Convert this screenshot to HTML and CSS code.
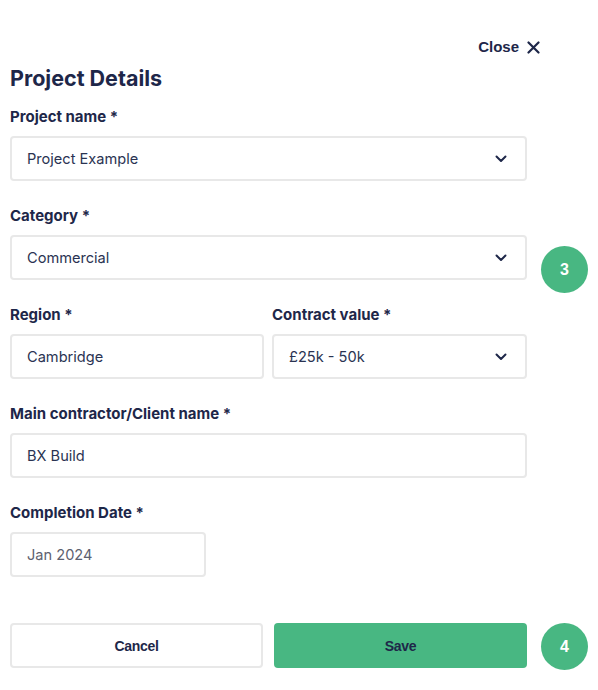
FILE: index.html
```html
<!DOCTYPE html>
<html>
<head>
<meta charset="utf-8">
<link rel="stylesheet" href="styles.css">
</head>
<body>
<div class="page">
  <div class="topbar">
    <button class="close">Close
      <svg class="close-x" width="13" height="13" viewBox="0 0 13 13"><path d="M1.5 1.5 L11.5 11.5 M11.5 1.5 L1.5 11.5" stroke="#1e2749" stroke-width="2.2" stroke-linecap="round"/></svg>
    </button>
  </div>
  <form class="form">
    <h1 class="title">Project Details</h1>
    <div class="field">
      <label class="label">Project name *</label>
      <div class="control select"><span class="value">Project Example</span><svg class="chev" width="12" height="8" viewBox="0 0 12 8"><path d="M1.5 1.5 L6 6 L10.5 1.5" fill="none" stroke="#1e2749" stroke-width="2" stroke-linecap="round" stroke-linejoin="round"/></svg></div>
    </div>
    <div class="field step-host">
      <label class="label">Category *</label>
      <div class="control select"><span class="value">Commercial</span><svg class="chev" width="12" height="8" viewBox="0 0 12 8"><path d="M1.5 1.5 L6 6 L10.5 1.5" fill="none" stroke="#1e2749" stroke-width="2" stroke-linecap="round" stroke-linejoin="round"/></svg></div>
      <span class="step step-3">3</span>
    </div>
    <div class="row">
      <div class="field">
        <label class="label">Region *</label>
        <div class="control"><span class="value">Cambridge</span></div>
      </div>
      <div class="field">
        <label class="label">Contract value *</label>
        <div class="control select"><span class="value">£25k - 50k</span><svg class="chev" width="12" height="8" viewBox="0 0 12 8"><path d="M1.5 1.5 L6 6 L10.5 1.5" fill="none" stroke="#1e2749" stroke-width="2" stroke-linecap="round" stroke-linejoin="round"/></svg></div>
      </div>
    </div>
    <div class="field">
      <label class="label">Main contractor/Client name *</label>
      <div class="control"><span class="value">BX Build</span></div>
    </div>
    <div class="field">
      <label class="label">Completion Date *</label>
      <div class="control date"><span class="value muted">Jan 2024</span></div>
    </div>
    <div class="actions step-host">
      <button type="button" class="btn btn-cancel">Cancel</button>
      <button type="button" class="btn btn-save">Save</button>
      <span class="step step-4">4</span>
    </div>
  </form>
</div>
</body>
</html>
```
FILE: styles.css
```css
* { box-sizing: border-box; }
html, body { margin: 0; padding: 0; background: #ffffff; }
body {
  font-family: Inter, "Liberation Sans", Arial, sans-serif;
  color: #1e2749;
  width: 598px;
  height: 690px;
  overflow: hidden;
}
.page { padding: 37px 0 0 10px; }
.topbar {
  width: 530px;
  display: flex;
  justify-content: flex-end;
}
.close {
  display: flex;
  align-items: center;
  gap: 8px;
  border: 0;
  background: none;
  padding: 0;
  font-family: "Liberation Sans", Arial, sans-serif;
  font-weight: 700;
  font-size: 15px;
  line-height: 20px;
  color: #1e2749;
}
.form { width: 517px; display: flex; flex-direction: column; }
.title {
  margin: 9px 0 17px;
  font-size: 21.5px;
  line-height: 24px;
  font-weight: 700;
  color: #1e2749;
}
.field { display: flex; flex-direction: column; margin-bottom: 25px; }
.label {
  font-size: 15px;
  line-height: 20px;
  font-weight: 700;
  margin-bottom: 9px;
  color: #1e2749;
}
.control {
  height: 45px;
  border: 2px solid #e8e8e8;
  border-radius: 4px;
  display: flex;
  align-items: center;
  justify-content: space-between;
  padding: 0 18px 0 15px;
}
.value { font-size: 14.6px; color: #2a3352; }
.value.muted { color: #5d6170; }
.chev { display: block; }
.date { width: 196px; }
.row { display: grid; grid-template-columns: 254px 255px; gap: 8px; }
.step-host { position: relative; }
.step {
  position: absolute;
  width: 47px;
  height: 47px;
  border-radius: 50%;
  background: #48b782;
  color: #ffffff;
  font-family: "Liberation Sans", Arial, sans-serif;
  font-weight: 700;
  font-size: 16px;
  display: flex;
  align-items: center;
  justify-content: center;
}
.step-3 { left: 531px; top: 40px; }
.step-4 { left: 531px; top: 0px; }
.actions {
  margin-top: 21px;
  display: grid;
  grid-template-columns: 253px 253px;
  gap: 11px;
}
.btn {
  height: 45px;
  border-radius: 4px;
  font-family: "Liberation Sans", Arial, sans-serif;
  font-weight: 700;
  font-size: 14px;
  letter-spacing: -0.3px;
  color: #1e2749;
}
.btn-cancel { background: #ffffff; border: 2px solid #e8e8e8; }
.btn-save { background: #48b782; border: 0; }
```
